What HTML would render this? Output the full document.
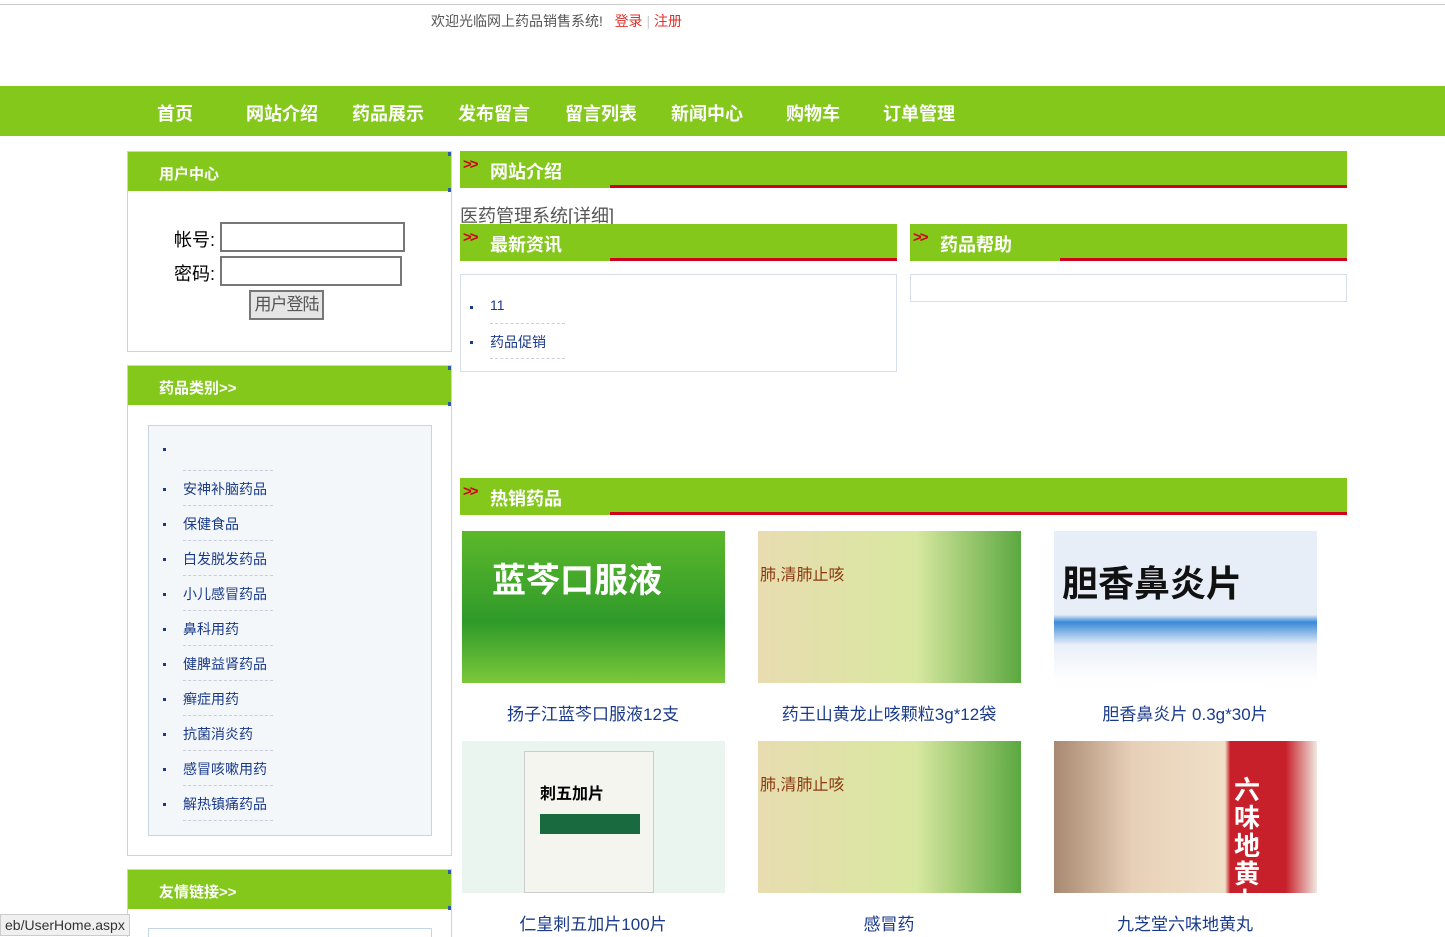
<!DOCTYPE html>
<html><head><meta charset="utf-8"><style>
*{margin:0;padding:0;box-sizing:border-box}
html,body{width:1445px;height:937px;overflow:hidden}
body{background:#fff;font-family:"Liberation Sans","Noto Sans CJK SC",sans-serif;position:relative}
.abs{position:absolute}
.g{background:#84c81c}
.nav a{position:absolute;top:100px;color:#fff;font-weight:bold;font-size:18px}
.side{border:1px solid #c5d5e5;}
.sh{height:39px;color:#fff;font-size:15px;font-weight:bold;padding:11px 0 0 31px;position:relative}
.sh:after{content:"";position:absolute;right:0;top:0;width:3px;height:4px;background:#2a5ca8;box-shadow:0 36px 0 #2a5ca8}
.rh{height:37px;color:#fff;font-size:18px;font-weight:bold;padding:7px 0 0 30px}
.rh:after{content:"";position:absolute;left:150px;right:0;bottom:0;height:3px;background:#d0021b}
.rh:before{content:">>";position:absolute;left:3px;top:5px;color:#d0021b;font-size:15px;font-weight:bold;letter-spacing:-2px}
.li{position:absolute;left:34px;font-size:14px;color:#1a3a8a;width:90px;border-bottom:1px dashed #ccd;height:35px;padding-top:8px;white-space:nowrap}
.li:before{content:"";position:absolute;left:-20px;top:17px;width:3px;height:3px;background:#1a3a8a}
.img{position:absolute;width:263px;height:152px;overflow:hidden}
.cap{position:absolute;width:296px;text-align:center;font-size:17px;color:#1a3a8a}
</style></head><body>
<div class="abs" style="left:0;top:4px;width:1445px;height:1px;background:#ccc"></div>
<div class="abs" style="left:431px;top:11px;font-size:14px;color:#555">欢迎光临网上药品销售系统! &nbsp;&nbsp;<span style="color:#e0302a">登录</span> <span style="color:#ccc">|</span> <span style="color:#e0302a">注册</span></div>
<div class="abs g" style="left:0;top:86px;width:1445px;height:50px"></div>
<div class="nav">
<a style="left:157px">首页</a><a style="left:246px">网站介绍</a><a style="left:352px">药品展示</a><a style="left:458px">发布留言</a><a style="left:565px">留言列表</a><a style="left:671px">新闻中心</a><a style="left:786px">购物车</a><a style="left:883px">订单管理</a>
</div>
<div class="abs side" style="left:127px;top:151px;width:325px;height:201px">
<div class="g sh">用户中心</div>
<div class="abs" style="left:46px;top:74px;font-size:18px">帐号:</div>
<div class="abs" style="left:92px;top:70px;width:185px;height:30px;border:2px solid #777"></div>
<div class="abs" style="left:46px;top:108px;font-size:18px">密码:</div>
<div class="abs" style="left:92px;top:104px;width:182px;height:30px;border:2px solid #777"></div>
<div class="abs" style="left:121px;top:138px;width:75px;height:30px;border:2px solid #777;background:#e5e5e5;font-size:17px;color:#555;text-align:center;line-height:26px;white-space:nowrap;overflow:hidden;letter-spacing:-1px">用户登陆</div>
</div>
<div class="abs side" style="left:127px;top:365px;width:325px;height:491px;background:#fff">
<div class="g sh">药品类别&gt;&gt;</div>
<div class="abs" style="left:20px;top:59px;width:284px;height:411px;border:1px solid #c5d5e5;background:#f3f7fa">
<div class="li" style="top:5px;height:40px"></div>
<div class="li" style="top:45px">安神补脑药品</div>
<div class="li" style="top:80px">保健食品</div>
<div class="li" style="top:115px">白发脱发药品</div>
<div class="li" style="top:150px">小儿感冒药品</div>
<div class="li" style="top:185px">鼻科用药</div>
<div class="li" style="top:220px">健脾益肾药品</div>
<div class="li" style="top:255px">癣症用药</div>
<div class="li" style="top:290px">抗菌消炎药</div>
<div class="li" style="top:325px">感冒咳嗽用药</div>
<div class="li" style="top:360px">解热镇痛药品</div>
</div></div>
<div class="abs side" style="left:127px;top:869px;width:325px;height:80px">
<div class="g sh">友情链接&gt;&gt;</div>
<div class="abs" style="left:20px;top:58px;width:284px;height:20px;border:1px solid #c5d5e5"></div>
</div>
<div class="abs g rh" style="left:460px;top:151px;width:887px">网站介绍</div>
<div class="abs" style="left:460px;top:202px;font-size:18px;color:#555;white-space:nowrap">医药管理系统[详细]</div>
<div class="abs g rh" style="left:460px;top:224px;width:437px">最新资讯</div>
<div class="abs g rh" style="left:910px;top:224px;width:437px">药品帮助</div>
<div class="abs" style="left:460px;top:274px;width:437px;height:98px;border:1px solid #d5e0ec">
<div class="li" style="left:29px;top:14px;width:75px">11</div>
<div class="li" style="left:29px;top:49px;width:75px">药品促销</div>
</div>
<div class="abs" style="left:910px;top:274px;width:437px;height:28px;border:1px solid #d5e0ec"></div>
<div class="abs g rh" style="left:460px;top:478px;width:887px">热销药品</div>
<div class="img" style="left:462px;top:531px;background:linear-gradient(#5cb82a,#2f9a2a 60%,#7cc83a)"><div style="color:#fff;font-size:34px;font-weight:bold;margin:22px 0 0 30px">蓝芩口服液</div></div>
<div class="img" style="left:758px;top:531px;background:linear-gradient(90deg,#e8dcb0,#d8e8a0 60%,#5ba840)"><div style="color:#8a3a10;font-size:16px;margin:30px 0 0 2px">肺,清肺止咳</div></div>
<div class="img" style="left:1054px;top:531px;background:linear-gradient(#e8eef8 55%,#3a8ad8 60%,#eaf0f8 75%,#fff)"><div style="color:#111;font-size:36px;font-weight:bold;margin:24px 0 0 8px">胆香鼻炎片</div></div>
<div class="img" style="left:462px;top:741px;background:#eaf5ef"><div style="position:absolute;left:62px;top:10px;width:130px;height:142px;background:#f5f5f0;border:1px solid #ccc"><div style="font-size:16px;font-weight:bold;margin:28px 0 0 15px">刺五加片</div><div style="margin:10px 0 0 15px;width:100px;height:20px;background:#1a6a40"></div></div></div>
<div class="img" style="left:758px;top:741px;background:linear-gradient(90deg,#e8dcb0,#d8e8a0 60%,#5ba840)"><div style="color:#8a3a10;font-size:16px;margin:30px 0 0 2px">肺,清肺止咳</div></div>
<div class="img" style="left:1054px;top:741px;background:linear-gradient(90deg,#a88870,#e8d0b8 30%,#f0e0c8 65%,#c8202a 67%,#c8202a 88%,#f0e8e0)"><div style="position:absolute;left:180px;top:35px;color:#fff;font-size:26px;font-weight:bold;width:30px;line-height:28px">六味地黄丸</div></div>
<div class="cap" style="left:445px;top:700px">扬子江蓝芩口服液12支</div>
<div class="cap" style="left:741px;top:700px">药王山黄龙止咳颗粒3g*12袋</div>
<div class="cap" style="left:1037px;top:700px">胆香鼻炎片 0.3g*30片</div>
<div class="cap" style="left:445px;top:910px">仁皇刺五加片100片</div>
<div class="cap" style="left:741px;top:910px">感冒药</div>
<div class="cap" style="left:1037px;top:910px">九芝堂六味地黄丸</div>
<div class="abs" style="left:0;top:914px;padding:2px 4px;background:#f0f0f0;border:1px solid #ccc;font-size:14px;color:#333">eb/UserHome.aspx</div>
</body></html>
